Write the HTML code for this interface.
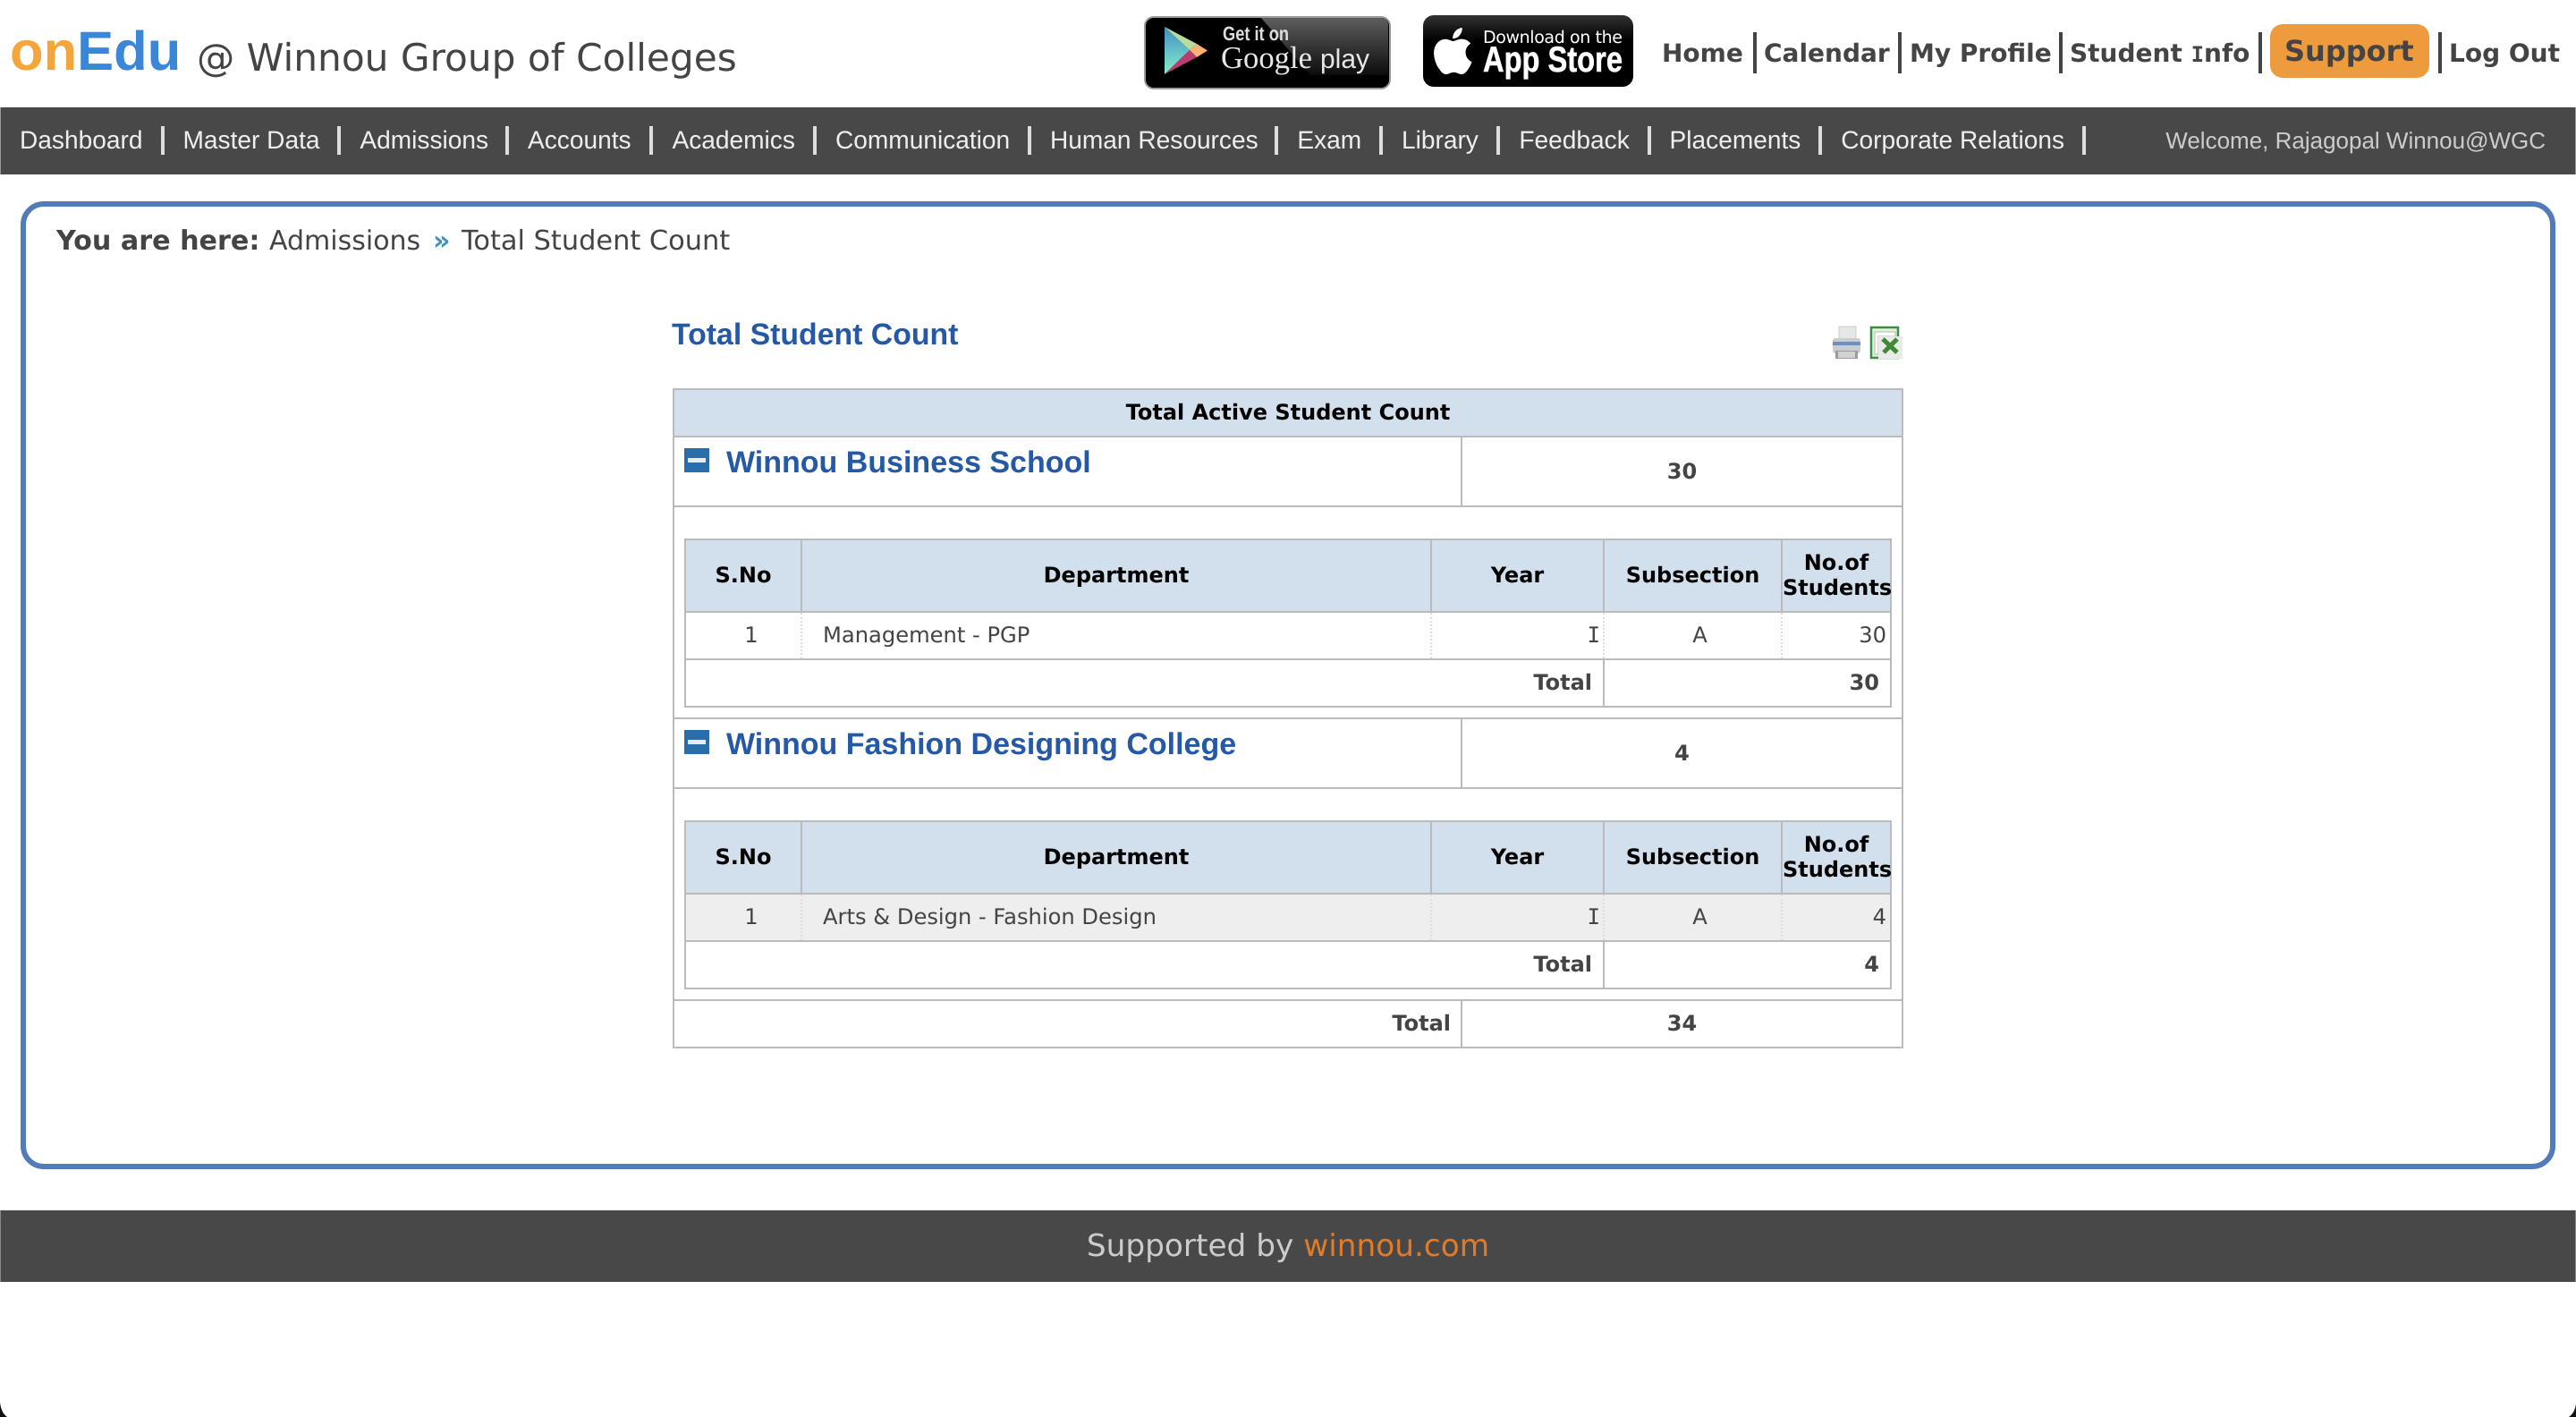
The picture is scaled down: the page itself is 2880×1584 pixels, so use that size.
<!DOCTYPE html>
<html lang="en">
<head>
<meta charset="utf-8">
<title>Total Student Count</title>
<style>
html,body{margin:0;padding:0;background:#fff}
body{position:relative;width:2880px;height:1584px;overflow:hidden;font-family:"DejaVu Sans",sans-serif;color:#444;text-rendering:geometricPrecision}
.a{position:absolute;white-space:nowrap;line-height:1}
.arial{font-family:"Liberation Sans",Arial,sans-serif}
.hl{font-weight:bold;font-size:28px;top:46px;color:#444}
.hs{position:absolute;top:36px;width:4px;height:46px;background:#444}
.mi{font-family:"DejaVu Sans Mono",monospace}
#nav{position:absolute;left:0;top:120px;width:2878px;height:75px;background:#484848;border-left:1px solid #999;border-right:1px solid #999}
#menu{position:absolute;left:0;top:21px;display:flex;font-family:"Liberation Sans",Arial,sans-serif;font-size:28.100px;color:#eee}
#menu span{display:block;box-sizing:border-box;height:32px;line-height:31px;padding:0 0 0 21px;border-right:4px solid #ddd;white-space:nowrap}
#panel{position:absolute;left:23px;top:225px;width:2822px;height:1070px;border:6px solid #527bba;border-radius:26px}
#footer{position:absolute;left:0;top:1353px;width:2878px;height:80px;background:#484848;border-left:1px solid #888;border-right:1px solid #888}
table{border-collapse:collapse;table-layout:fixed;border-spacing:0}
td,th{padding:0;border:2px solid #bbb;line-height:1;font-size:24px;color:#444;box-sizing:border-box}
#outer{position:absolute;left:752px;top:434px;width:1374px}
th{background:#d2dfec;color:#000;font-weight:bold;text-align:center}
.inner th{padding-bottom:2px}
#outer>tbody>tr>td,#outer>tbody>tr>th{vertical-align:middle}
.sec{position:relative;vertical-align:top}
.sec .ttl{position:absolute;left:58px;top:11px;font:bold 34px/1 "Liberation Sans",Arial,sans-serif;color:#2559a5;white-space:nowrap}
.sec .ic{position:absolute;left:11px;top:12px;width:28px;height:27px;background:#2a6dab}
.sec .ic i{position:absolute;left:4px;top:11px;width:20px;height:5px;background:#e4edf5}
.num{text-align:center;font-weight:bold}
.inner{margin:35px 0 0 11px;width:1348px}
.inner td.d{border-right:2px dotted #ddd;border-left:2px dotted #ddd;font-size:24.200px}
.b{font-weight:bold}
.r{text-align:right}
</style>
</head>
<body>

<div class="a arial" style="left:11px;top:27px;font-size:61.500px;font-weight:bold;color:#f4a63a">on<span style="color:#3c86d8">Edu</span></div>
<div class="a" style="left:220px;top:44px;font-size:42.250px;color:#444">@ Winnou Group of Colleges</div>

<svg class="a" style="left:1279px;top:18px" width="276" height="82" viewBox="0 0 276 82">
<defs>
<linearGradient id="gl" x1="0" y1="0" x2="0" y2="1"><stop offset="0" stop-color="#5e5e5e"/><stop offset="1" stop-color="#0c0c0c"/></linearGradient>
<linearGradient id="tb" x1="0" y1="0" x2="0" y2="1"><stop offset="0" stop-color="#3f8fc4"/><stop offset="1" stop-color="#86efca"/></linearGradient>
</defs>
<rect x="1" y="1" width="274" height="80" rx="10" fill="#000" stroke="#9a9a9a" stroke-width="2"/>
<path d="M131 2H265a8 8 0 0 1 8 8V66H186Z" fill="url(#gl)"/>
<path d="M23 12L51 38L23 65Z" fill="url(#tb)"/>
<path d="M23 12L59 31L51 38Z" fill="#b9dc9c"/>
<path d="M59 31L71 38.500L59 46L51 38Z" fill="#fbb273"/>
<path d="M23 65L59 46L51 38Z" fill="#b93d6e"/>
<text x="88" y="27" font-family="Liberation Sans" font-weight="bold" font-size="22" fill="#ddd" textLength="74" lengthAdjust="spacingAndGlyphs">Get it on</text>
<text x="86" y="58" font-family="Liberation Serif" font-size="35" fill="#e6e6e6" textLength="102" lengthAdjust="spacingAndGlyphs">Google</text>
<text x="197" y="58" font-family="Liberation Sans" font-size="30" fill="#e6e6e6" textLength="55" lengthAdjust="spacingAndGlyphs">play</text>
</svg>

<svg class="a" style="left:1591px;top:17px" width="235" height="81" viewBox="0 0 235 81">
<defs><linearGradient id="as" x1="0" y1="0" x2="0" y2="1"><stop offset="0" stop-color="#333"/><stop offset=".35" stop-color="#000"/><stop offset="1" stop-color="#000"/></linearGradient></defs>
<rect x="0" y="0" width="235" height="80" rx="12" fill="url(#as)"/>
<path transform="translate(7.300 14) scale(2.170)" fill="#fff" d="M12.152 6.896c-.948 0-2.415-1.078-3.960-1.040-2.040.027-3.910 1.183-4.961 3.014-2.117 3.675-.546 9.103 1.519 12.090 1.013 1.454 2.208 3.090 3.792 3.039 1.520-.065 2.090-.987 3.935-.987 1.831 0 2.350.987 3.960.948 1.637-.026 2.676-1.480 3.676-2.948 1.156-1.688 1.636-3.325 1.662-3.415-.039-.013-3.182-1.221-3.220-4.857-.026-3.040 2.480-4.494 2.597-4.559-1.429-2.090-3.623-2.324-4.390-2.376-2-.156-3.675 1.090-4.610 1.090zM15.530 3.830c.843-1.012 1.400-2.427 1.245-3.830-1.207.052-2.662.805-3.532 1.818-.780.896-1.454 2.338-1.273 3.714 1.338.104 2.715-.688 3.559-1.701"/>
<text x="67" y="31" font-family="DejaVu Sans" font-size="19" fill="#fff" textLength="156" lengthAdjust="spacing">Download on the</text>
<text x="67" y="63" font-family="Liberation Sans" font-weight="bold" font-size="40" fill="#fff" stroke="#fff" stroke-width=".6" textLength="156" lengthAdjust="spacingAndGlyphs">App Store</text>
</svg>

<div class="a hl" style="left:1858px">Home</div>
<div class="hs" style="left:1960px"></div>
<div class="a hl" style="left:1972px">Calendar</div>
<div class="hs" style="left:2122px"></div>
<div class="a hl" style="left:2135px">My Profile</div>
<div class="hs" style="left:2302px"></div>
<div class="a hl" style="left:2314px">Student <span class="mi" style="font-size:24px">I</span>nfo</div>
<div class="hs" style="left:2525px"></div>
<div class="a" style="left:2538px;top:27px;width:178px;height:60px;background:#ee9b3e;border-radius:14px"></div>
<div class="a" style="left:2554px;top:41px;font-size:32px;font-weight:bold;color:#444">Support</div>
<div class="hs" style="left:2726px"></div>
<div class="a hl" style="left:2738px">Log Out</div>

<div id="nav">
  <div id="menu"><span style="width:182.500px">Dashboard</span><span style="width:197.900px">Master Data</span><span style="width:187.600px">Admissions</span><span style="width:161.500px">Accounts</span><span style="width:182.500px">Academics</span><span style="width:240px">Communication</span><span style="width:276.400px">Human Resources</span><span style="width:116.600px">Exam</span><span style="width:131.400px">Library</span><span style="width:168.200px">Feedback</span><span style="width:191.700px">Placements</span><span style="width:295.200px">Corporate Relations</span></div>
  <div class="a arial" style="right:33px;top:24px;font-size:26px;color:#ccc">Welcome, Rajagopal Winnou@WGC</div>
</div>

<div id="panel"></div>

<div class="a" style="left:63px;top:255px;font-size:30.200px;font-weight:bold;color:#444">You are here:</div>
<div class="a" style="left:301px;top:255px;font-size:30px;color:#444">Admissions</div>
<div class="a" style="left:484px;top:255px;font-size:30px;font-weight:bold;color:#3f8fc0">»</div>
<div class="a" style="left:516px;top:255px;font-size:30.400px;color:#444">Total Student Count</div>

<div class="a arial" style="left:751px;top:358px;font-size:33.800px;font-weight:bold;color:#2559a5">Total Student Count</div>

<svg class="a" style="left:2046px;top:362px" width="84" height="42" viewBox="0 0 84 42">
<rect x="10" y="3" width="19" height="16" fill="#e6e6e6" stroke="#cfcfcf"/>
<rect x="3" y="16" width="31" height="17" rx="3" fill="#c9cdd2"/>
<rect x="3" y="20" width="31" height="4" fill="#6f8fc0"/>
<rect x="6" y="30" width="25" height="9" fill="#9a9a9a"/>
<rect x="9" y="31" width="19" height="7" fill="#d2d2d2"/>
<rect x="46" y="4" width="30" height="34" fill="#e4efdf" stroke="#3f8a45" stroke-width="2.500"/>
<path d="M50 9H73V14H54V34H50Z" fill="#fff" stroke="#9cc49c" stroke-width="1"/>
<rect x="54" y="14" width="27" height="25" fill="#e8ebe8"/>
<path d="M59 17L75 32M75 17L60 32" stroke="#3f8a35" stroke-width="5" fill="none"/>
</svg>

<table id="outer">
<colgroup><col style="width:881px"><col style="width:493px"></colgroup>
<tbody>
<tr style="height:53px"><th colspan="2" style="padding-bottom:2px">Total Active Student Count</th></tr>
<tr style="height:78px">
  <td class="sec"><span class="ic"><i></i></span><span class="ttl">Winnou Business School</span></td>
  <td class="num">30</td>
</tr>
<tr style="height:237px"><td colspan="2" style="vertical-align:top">
  <table class="inner">
  <colgroup><col style="width:130px"><col style="width:704px"><col style="width:193px"><col style="width:199px"><col style="width:122px"></colgroup>
  <tr style="height:81px"><th>S.No</th><th>Department</th><th>Year</th><th>Subsection</th><th style="line-height:28px">No.of<br>Students</th></tr>
  <tr style="height:53px"><td class="d" style="text-align:center;padding:0 0 1px 18px;border-left:2px solid #bbb">1</td><td class="d" style="padding:0 0 1px 23px">Management - PGP</td><td class="d r mi" style="padding:0 3px 1px 0">I</td><td class="d" style="text-align:center;padding:0 0 1px 16px">A</td><td class="d r" style="padding:0 4px 1px 0;border-right:2px solid #bbb">30</td></tr>
  <tr style="height:53px"><td colspan="3" class="b r" style="padding:0 12px 1px 0">Total</td><td colspan="2" class="b r" style="padding:0 12px 1px 0">30</td></tr>
  </table>
</td></tr>
<tr style="height:78px">
  <td class="sec"><span class="ic"><i></i></span><span class="ttl">Winnou Fashion Designing College</span></td>
  <td class="num">4</td>
</tr>
<tr style="height:237px"><td colspan="2" style="vertical-align:top">
  <table class="inner">
  <colgroup><col style="width:130px"><col style="width:704px"><col style="width:193px"><col style="width:199px"><col style="width:122px"></colgroup>
  <tr style="height:81px"><th>S.No</th><th>Department</th><th>Year</th><th>Subsection</th><th style="line-height:28px">No.of<br>Students</th></tr>
  <tr style="height:53px;background:#eee"><td class="d" style="text-align:center;padding:0 0 1px 18px;border-left:2px solid #bbb">1</td><td class="d" style="padding:0 0 1px 23px">Arts &amp; Design - Fashion Design</td><td class="d r mi" style="padding:0 3px 1px 0">I</td><td class="d" style="text-align:center;padding:0 0 1px 16px">A</td><td class="d r" style="padding:0 4px 1px 0;border-right:2px solid #bbb">4</td></tr>
  <tr style="height:53px"><td colspan="3" class="b r" style="padding:0 12px 1px 0">Total</td><td colspan="2" class="b r" style="padding:0 12px 1px 0">4</td></tr>
  </table>
</td></tr>
<tr style="height:53px">
  <td class="b r" style="padding:0 11px 2px 0">Total</td>
  <td class="num" style="padding-bottom:2px">34</td>
</tr>
</tbody>
</table>

<div id="footer">
  <div class="a" style="left:0;width:100%;top:23px;text-align:center;font-size:34.300px;color:#ccc">Supported by <span style="color:#e07b2a">winnou.com</span></div>
</div>

<svg class="a" style="left:0;top:1554px" width="2880" height="30" viewBox="0 0 2880 30">
<path d="M0 13Q1 25 8 30H0Z" fill="#111"/>
<path d="M2880 15Q2879 25 2872 30H2880Z" fill="#111"/>
</svg>

</body>
</html>
